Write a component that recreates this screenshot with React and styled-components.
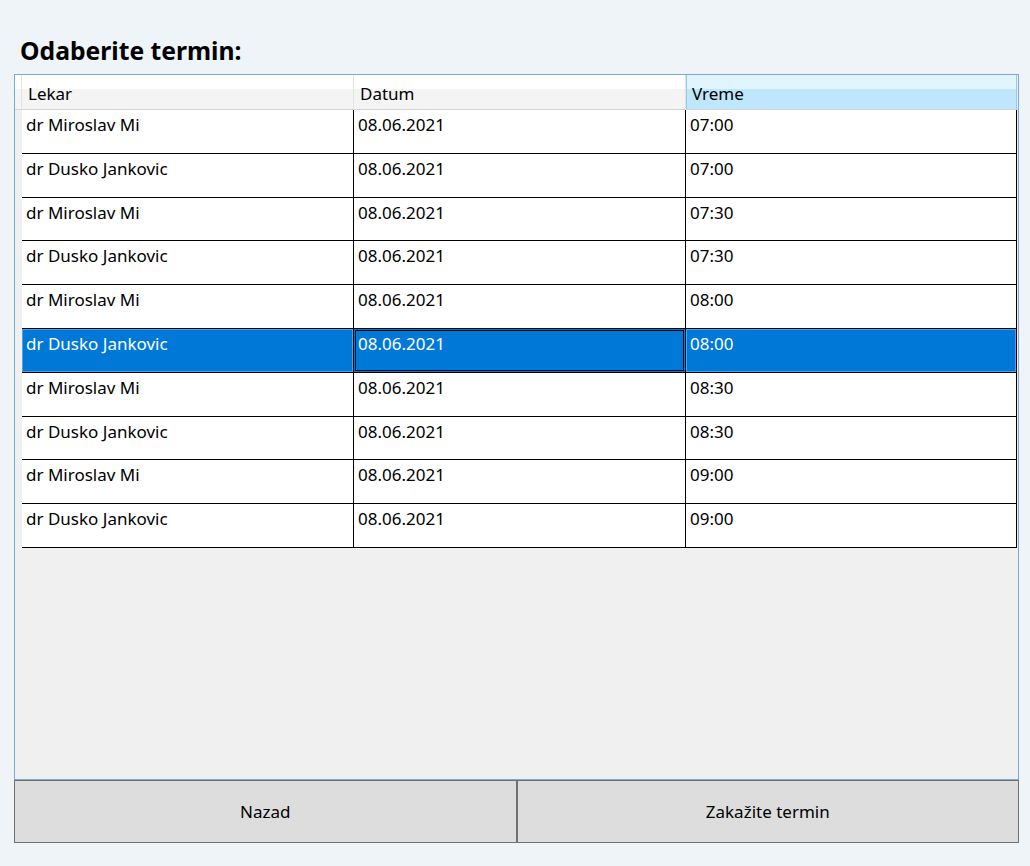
import React from "react";
import styled, { createGlobalStyle } from "styled-components";

const GlobalStyle = createGlobalStyle`
  body {
    margin: 0;
    background: #eff4f8;
    font-family: "Noto Sans", "Open Sans", sans-serif;
    color: #000;
  }
`;

const termini = [
  { lekar: "dr Miroslav Mi", datum: "08.06.2021", vreme: "07:00" },
  { lekar: "dr Dusko Jankovic", datum: "08.06.2021", vreme: "07:00" },
  { lekar: "dr Miroslav Mi", datum: "08.06.2021", vreme: "07:30" },
  { lekar: "dr Dusko Jankovic", datum: "08.06.2021", vreme: "07:30" },
  { lekar: "dr Miroslav Mi", datum: "08.06.2021", vreme: "08:00" },
  { lekar: "dr Dusko Jankovic", datum: "08.06.2021", vreme: "08:00" },
  { lekar: "dr Miroslav Mi", datum: "08.06.2021", vreme: "08:30" },
  { lekar: "dr Dusko Jankovic", datum: "08.06.2021", vreme: "08:30" },
  { lekar: "dr Miroslav Mi", datum: "08.06.2021", vreme: "09:00" },
  { lekar: "dr Dusko Jankovic", datum: "08.06.2021", vreme: "09:00" },
];

function App() {
  const selected = 5;
  return (
    <Page>
      <GlobalStyle />
      <Title>Odaberite termin:</Title>
      <Grid>
        <HeaderRow>
          <HeaderCell />
          <HeaderCell>Lekar</HeaderCell>
          <HeaderCell>Datum</HeaderCell>
          <HeaderCell hover>Vreme</HeaderCell>
        </HeaderRow>
        {termini.map((t, i) => (
          <Row key={i}>
            <RowHeader />
            <Cell selected={i === selected}>{t.lekar}</Cell>
            <Cell selected={i === selected} focused={i === selected}>
              {t.datum}
            </Cell>
            <Cell selected={i === selected}>{t.vreme}</Cell>
          </Row>
        ))}
      </Grid>
      <Buttons>
        <Button>Nazad</Button>
        <Button>Zakažite termin</Button>
      </Buttons>
    </Page>
  );
}

const Page = styled.div`
  width: 1005px;
  padding: 35px 0 0 14px;
`;

const Title = styled.h1`
  margin: 0 0 7px 6px;
  height: 32px;
  line-height: 31px;
  font-size: 24.7px;
  font-weight: 700;
`;

const Grid = styled.div`
  height: 704px;
  border: 1px solid #7ea6d6;
  background: #f0f0f0;
  display: flex;
  flex-direction: column;
`;

const HeaderRow = styled.div`
  display: grid;
  grid-template-columns: 7px 332px 332px 331px;
  height: 34px;
  border-bottom: 1px solid #d5d5d5;
`;

const HeaderCell = styled.div`
  padding: 7px 0 0 6px;
  line-height: 23px;
  font-size: 17px;
  background: ${(p) =>
    p.hover
      ? "linear-gradient(#e1f5fe 0, #e1f5fe 40%, #bee6fd 40%, #bee6fd 100%)"
      : "linear-gradient(#ffffff 0, #ffffff 40%, #f4f4f4 40%, #f4f4f4 100%)"};
  box-shadow: ${(p) =>
    p.hover ? "inset 1px 0 0 #8fcbef, inset -1px 0 0 #8fcbef" : "inset -1px 0 0 #e3e3e3"};
`;

const Row = styled.div`
  display: grid;
  grid-template-columns: 7px 332px 332px 331px;
  height: 43.8px;
`;

const RowHeader = styled.div`
  background: #f0f0f0;
`;

const Cell = styled.div`
  padding: 3px 0 0 4px;
  line-height: 23px;
  font-size: 17px;
  background: ${(p) => (p.selected ? "#0078d7" : "#fff")};
  color: ${(p) => (p.selected ? "#fff" : "#000")};
  border-right: 1px solid #000;
  border-bottom: 1px solid #000;
  box-shadow: ${(p) =>
    p.focused
      ? "inset 0 0 0 1px #0078d7, inset 0 0 0 2px #000"
      : p.selected
      ? "inset 0 0 0 1px #4ea2e6"
      : "none"};
`;

const Buttons = styled.div`
  display: flex;
  height: 63px;
`;

const Button = styled.button`
  flex: 1;
  background: #dddddd;
  border: 1px solid #707070;
  font-family: "Noto Sans", "Open Sans", sans-serif;
  font-size: 17px;
  color: #000;
  padding: 0;
`;

export default App;
